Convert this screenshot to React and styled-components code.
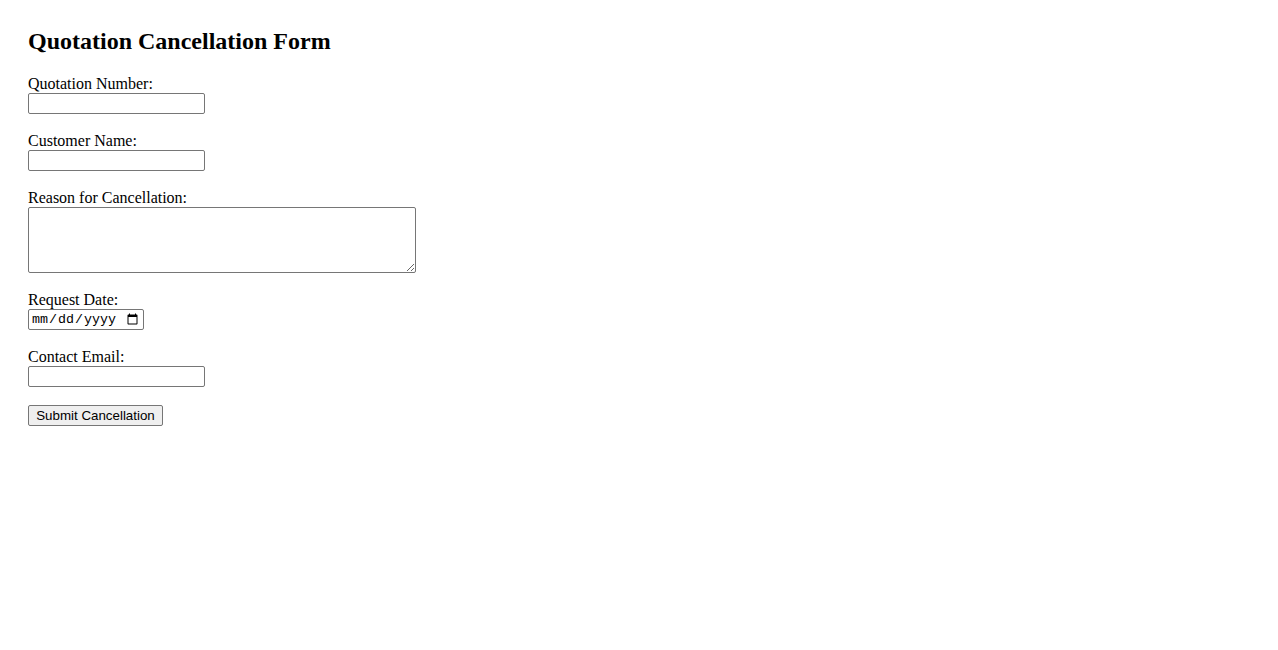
import React from "react";
import styled, { createGlobalStyle } from "styled-components";

const Global = createGlobalStyle`
  html, body { background: #fff; }
  body {
    margin: 0;
    padding: 28px;
    font-family: "Liberation Serif", "Times New Roman", serif;
    font-size: 16px;
    color: #000;
  }
`;

const Title = styled.h2`
  font-size: 24px;
  font-weight: bold;
  margin: 0 0 19.92px;
`;

const Label = styled.label`
  font-size: 16px;
`;

const TextInput = styled.input`
  box-sizing: border-box;
  width: 177px;
  height: 21px;
  padding: 1px 2px;
  border: 1px solid #767676;
  border-radius: 2px;
  font-family: "Liberation Sans", Arial, sans-serif;
  font-size: 13.33px;
  background: #fff;
`;

const DateInput = styled(TextInput)`
  width: 116px;
  font-family: "Liberation Mono", "Courier New", monospace;
`;

const TextArea = styled.textarea`
  box-sizing: border-box;
  width: 388px;
  height: 66px;
  padding: 2px;
  border: 1px solid #767676;
  border-radius: 2px;
  font-family: "Liberation Mono", monospace;
  font-size: 13.33px;
  vertical-align: bottom;
`;

const Button = styled.button`
  box-sizing: border-box;
  width: 135px;
  height: 21px;
  padding: 1px 6px;
  border: 1px solid #767676;
  border-radius: 2px;
  background: #efefef;
  font-family: "Liberation Sans", Arial, sans-serif;
  font-size: 13.33px;
  color: #000;
`;

export default function App() {
  return (
    <>
      <Global />
      <Title>Quotation Cancellation Form</Title>
      <form onSubmit={(e) => e.preventDefault()}>
        <Label htmlFor="qn">Quotation Number:</Label>
        <br />
        <TextInput id="qn" type="text" />
        <br />
        <br />
        <Label htmlFor="cn">Customer Name:</Label>
        <br />
        <TextInput id="cn" type="text" />
        <br />
        <br />
        <Label htmlFor="rc">Reason for Cancellation:</Label>
        <br />
        <TextArea id="rc" rows={4} />
        <br />
        <br />
        <Label htmlFor="rd">Request Date:</Label>
        <br />
        <DateInput id="rd" type="date" />
        <br />
        <br />
        <Label htmlFor="ce">Contact Email:</Label>
        <br />
        <TextInput id="ce" type="email" />
        <br />
        <br />
        <Button type="submit">Submit Cancellation</Button>
      </form>
    </>
  );
}
